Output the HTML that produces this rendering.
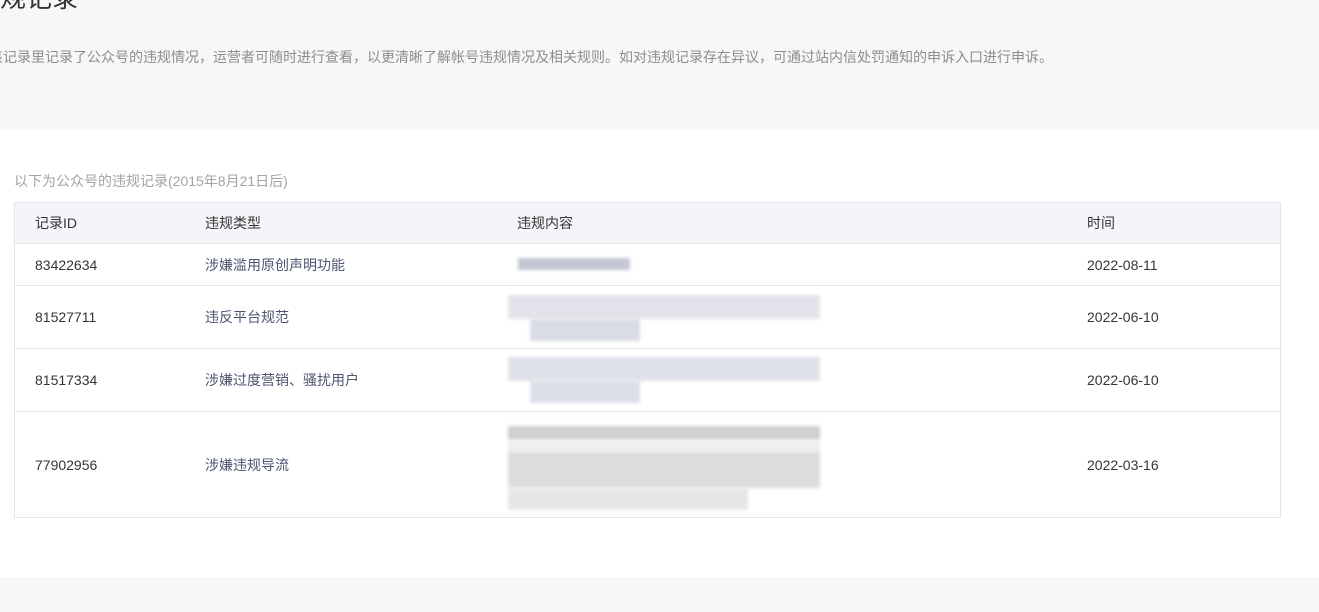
<!DOCTYPE html>
<html><head><meta charset="utf-8"><style>
*{margin:0;padding:0;box-sizing:border-box}
body{width:1319px;height:612px;overflow:hidden;background:#fff;font-family:"Liberation Sans","Noto Sans CJK SC",sans-serif;position:relative}
.top{position:absolute;left:0;top:0;width:1319px;height:130px;background:#f6f7f9}
.title{position:absolute;left:-26px;top:-18px;font-size:26px;line-height:32px;color:#353535;white-space:nowrap}
.desc{position:absolute;left:-11px;top:48px;font-size:14px;line-height:18px;color:#8d8d8d;white-space:nowrap}
.sub{position:absolute;left:14px;top:172px;font-size:14px;line-height:18px;color:#a3a3a3;white-space:nowrap}
.tbl{position:absolute;left:14px;top:202px;width:1267px;height:316px;border:1px solid #e4e6ea}
.row{position:absolute;left:0;width:1265px;border-bottom:1px solid #e4e6ea;font-size:14px;color:#353535}
.row span{position:absolute;white-space:nowrap;line-height:18px}
.c1{left:20px}.c2{left:190px;color:#4c5670}.c4{left:1072px}
.hd{background:#f4f5f8}
.hd .c2{color:#353535}
.bl{position:absolute;background:#dcdde4;filter:blur(1.5px)}
.bot{position:absolute;left:0;top:578px;width:1319px;height:34px;background:#f6f7f9;border-top:1px solid #eceef1}
</style></head><body>
<div class="top">
<div class="title">违规记录</div>
<div class="desc">该记录里记录了公众号的违规情况，运营者可随时进行查看，以更清晰了解帐号违规情况及相关规则。如对违规记录存在异议，可通过站内信处罚通知的申诉入口进行申诉。</div>
</div>
<div class="sub">以下为公众号的违规记录(2015年8月21日后)</div>
<div class="tbl">
<div class="row hd" style="top:0;height:41px"><span class="c1" style="top:11px">记录ID</span><span class="c2" style="top:11px">违规类型</span><span style="left:502px;top:11px">违规内容</span><span class="c4" style="top:11px">时间</span></div>
<div class="row" style="top:41px;height:42px"><span class="c1" style="top:12px">83422634</span><span class="c2" style="top:12px">涉嫌滥用原创声明功能</span><span class="c4" style="top:12px">2022-08-11</span>
<div class="bl" style="left:503px;top:14px;width:112px;height:12px;background:#c4c7d4"></div></div>
<div class="row" style="top:83px;height:63px"><span class="c1" style="top:22px">81527711</span><span class="c2" style="top:22px">违反平台规范</span><span class="c4" style="top:22px">2022-06-10</span>
<div class="bl" style="left:493px;top:9px;width:312px;height:24px;background:#e2e3ea"></div>
<div class="bl" style="left:515px;top:33px;width:110px;height:22px;background:#dadce5"></div></div>
<div class="row" style="top:146px;height:63px"><span class="c1" style="top:22px">81517334</span><span class="c2" style="top:22px">涉嫌过度营销、骚扰用户</span><span class="c4" style="top:22px">2022-06-10</span>
<div class="bl" style="left:493px;top:8px;width:312px;height:24px;background:#e0e2ea"></div>
<div class="bl" style="left:515px;top:32px;width:110px;height:22px;background:#dddfe8"></div></div>
<div class="row" style="top:209px;height:106px"><span class="c1" style="top:44px">77902956</span><span class="c2" style="top:44px">涉嫌违规导流</span><span class="c4" style="top:44px">2022-03-16</span>
<div class="bl" style="left:493px;top:14px;width:312px;height:14px;background:#cfd0d2"></div>
<div class="bl" style="left:493px;top:28px;width:312px;height:12px;background:#eeeeee"></div>
<div class="bl" style="left:493px;top:40px;width:312px;height:36px;background:#dcdcdd"></div>
<div class="bl" style="left:493px;top:76px;width:240px;height:22px;background:#e6e6e7"></div></div>
</div>
<div class="bot"></div>
</body></html>
